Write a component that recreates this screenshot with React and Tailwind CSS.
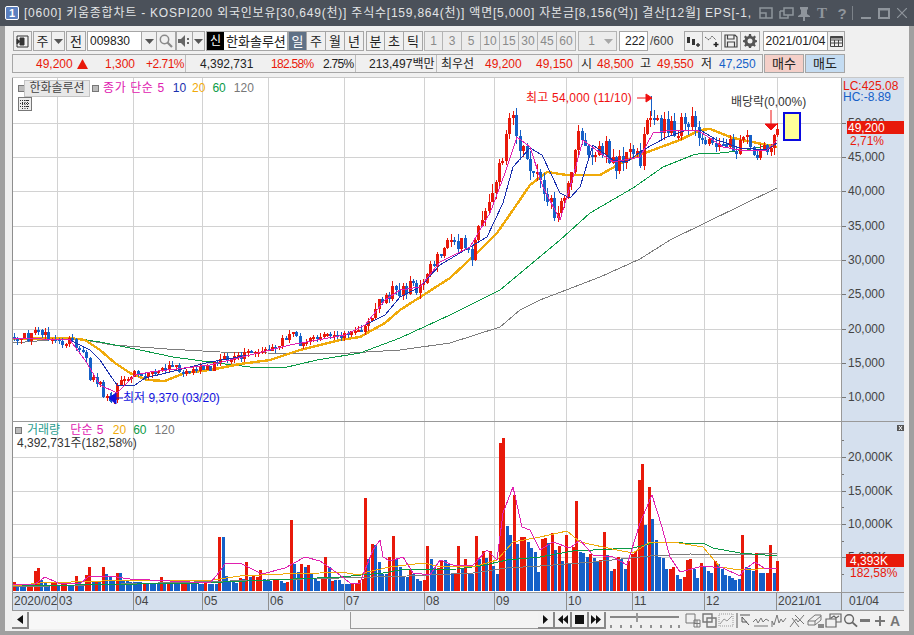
const RED = "#e8190a";
const BLUE = "#1560c8";

const pricePath = [[13,337],[20,338],[30,336],[38,327],[48,336],[58,338],[65,343],[70,339],[77,348],[87,360],[90,378],[97,380],[100,385],[103,395],[112,400],[117,388],[122,380],[128,377],[133,373],[143,377],[157,372],[173,368],[190,370],[207,369],[218,360],[233,360],[253,353],[273,349],[290,333],[300,343],[310,338],[328,332],[347,335],[363,332],[367,317],[380,305],[392,290],[405,288],[418,287],[428,270],[440,258],[448,243],[460,242],[472,255],[480,223],[487,213],[495,193],[502,157],[505,133],[512,117],[515,133],[522,147],[528,163],[535,173],[543,190],[550,203],[557,218],[562,203],[567,187],[573,167],[578,133],[583,137],[588,147],[595,160],[603,147],[608,153],[615,170],[620,153],[627,155],[635,142],[640,163],[645,133],[649,112],[655,123],[663,128],[673,127],[680,127],[690,123],[697,125],[703,138],[710,143],[717,152],[725,142],[735,148],[742,140],[747,137],[757,158],[763,150],[770,147],[773,138],[777,130]];

const ma5 = "13,338 70,340 85,360 100,385 117,393 135,375 150,372 210,365 250,355 290,345 345,335 365,325 385,300 400,290 420,287 440,262 470,247 490,213 505,173 517,137 530,147 543,187 560,220 573,177 583,140 600,153 613,162 640,157 653,133 673,130 697,130 710,138 723,147 740,150 767,150 777,140";
const ma10 = "13,338 70,340 90,350 100,360 110,375 117,385 135,385 145,378 170,372 210,362 250,355 290,345 345,335 365,325 385,315 400,297 420,287 440,265 470,247 487,237 503,203 513,167 530,148 542,155 560,193 570,198 580,187 593,145 613,160 627,162 643,150 667,137 687,130 700,130 717,140 740,148 767,150 777,143";
const ma20 = "13,339 70,338 85,340 100,350 115,363 130,373 147,380 165,381 185,373 210,370 240,364 270,360 300,350 340,340 360,337 385,323 400,310 450,278 480,250 497,233 513,210 530,185 547,172 567,175 600,175 623,162 653,150 680,140 700,130 710,129 733,138 757,143 777,147";
const ma60 = "13,338 73,338 100,342 140,350 173,357 217,363 250,367 283,368 317,360 360,353 400,338 450,315 500,290 530,265 560,240 590,213 633,188 663,167 693,155 703,153 720,153 747,150 777,143";
const ma120 = "13,343 73,338 113,345 167,349 220,352 267,353 333,354 400,350 450,343 500,327 520,310 540,300 600,277 640,259 670,240 777,188";

const vol1 = [9,-4,-4,-4,4,4,20,23,-11,-9,-6,9,9,-6,8,8,-6,-6,15,-10,-7,16,24,-10,10,-10,24,-17,-14,-10,18,-18,-10,-10,-9,-9,-9,-9,7,-7,-7,-7,-7,14,-9,9,-8,-10,-10,8,8,-8,-8,-8,-7,-7,10,-7,-7,-7,54,-54,-15,-10,-9,-8,13,-12,29,-14,15,14,21,-12,-10,-10,12,12,-10,-8,9,71,-27,-19,27,-24,26,-17,-12,-10,13,34,-24,10,-11,-11,-7,-7,-7,7,8,11,12];
const vol2 = [93,-32,47,-46,-29,-17,-17,34,55,-32,-24,-15,-14,21,-17,-12,-10,11,45,-32,-23,23,31,-31,-27,-17,17,45,-22,32,-18,-17,55,-32,40,-33,40,-25,-17,148,153,-65,-56,96,-47,54,54,-49,-43,-39,-19,52,53,-48,58,-41,45,-30,56,-28,44,90,-39,-38,-34,37,-33,-30,31,59,-36,-20,22,34,-32,-22,30,37,40,111,127,-66,104,-72,-51,-34,-33,-22,22,24,-16,-12,14,31,32,-22,-13,28,-24,-20,-18,30,-27,-22,-16,-15,-13,-11,-12,56,-24,-23,-20,38,-18,-18,18,46,-18,30];

const volMa5 = "13,585 35,584 45,577 58,583 80,584 88,577 110,576 130,579 210,583 217,575 225,564 240,563 262,574 285,568 305,557 320,561 340,575 350,583 360,583 365,570 373,550 380,540 383,557 390,561 403,557 413,573 430,575 440,560 453,565 473,565 487,550 497,560 503,513 513,487 522,527 530,530 540,550 553,542 570,548 580,540 593,555 613,557 627,565 640,523 652,495 662,527 670,557 680,572 703,566 723,568 740,576 744,570 755,562 764,568 777,568";
const volMa20 = "13,586 40,583 133,580 213,580 240,576 283,574 320,573 340,572 360,575 367,572 390,567 423,563 437,566 473,567 497,560 513,542 540,537 567,531 580,542 617,550 633,553 650,542 673,542 703,547 720,567 740,570 777,568";
const volMa60 = "13,586 200,583 340,577 383,573 400,570 457,569 480,566 507,560 540,557 573,551 633,548 657,542 683,543 703,543 713,548 740,553 777,556";
const volMa120 = "13,587 340,578 407,576 473,573 507,568 540,566 593,562 650,556 690,554 740,555 777,553";

const gridX = [57, 133, 202, 268, 344, 424, 494, 566, 632, 704, 777];
const gridY = [123, 157, 191, 226, 260, 294, 329, 363, 397];
const volGridY = [457, 491, 524, 557];

function rnd(i) {
  const s = Math.sin(i * 127.1 + 11.7) * 43758.5453;
  return s - Math.floor(s);
}

function pathAt(x) {
  for (let i = 1; i < pricePath.length; i++) {
    const [x0, y0] = pricePath[i - 1];
    const [x1, y1] = pricePath[i];
    if (x <= x1) return y0 + ((y1 - y0) * (x - x0)) / (x1 - x0);
  }
  return 130;
}

function buildCandles() {
  const out = [];
  let prev = 337;
  for (let i = 0; i < 223; i++) {
    const x = Math.min(Math.round(14 + i * 3.44), 777);
    const scale = x > 480 && x < 700 ? 13 : x > 360 ? 9 : 6;
    const close = i === 222 ? 129 : pathAt(x) + (rnd(i) - 0.5) * scale * 1.5;
    const up = close <= prev;
    const top = Math.min(close, prev);
    const bottom = Math.max(Math.max(close, prev), top + 2);
    out.push({
      x,
      top: Math.round(top),
      bottom: Math.round(bottom),
      hi: Math.round(top - rnd(i + 300) * scale * 0.7),
      lo: Math.round(bottom + rnd(i + 600) * scale * 0.7),
      up,
    });
    prev = close;
  }
  return out;
}

const candles = buildCandles();

function Line({ points, color, width = 1 }) {
  return <polyline points={points} fill="none" stroke={color} strokeWidth={width} shapeRendering="crispEdges" />;
}

function Grid({ rows, y0, y1 }) {
  return (
    <g stroke="#d2d2d2" strokeWidth="1" shapeRendering="crispEdges">
      {gridX.map((x) => (
        <line key={x} x1={x + 0.5} x2={x + 0.5} y1={y0} y2={y1} />
      ))}
      {rows.map((y) => (
        <line key={y} x1={12} x2={841} y1={y + 0.5} y2={y + 0.5} />
      ))}
    </g>
  );
}

function PriceChart() {
  return (
    <svg viewBox="13 78 828 343" className="block h-[343px] w-[828px] bg-white">
      <Grid rows={gridY} y0={78} y1={421} />
      <Line points={ma120} color="#7d7d7d" />
      <Line points={ma60} color="#0a9a46" />
      <Line points={ma20} color="#f0aa0a" width={2.4} />
      <g shapeRendering="crispEdges">
        {candles.map((c, i) => (
          <g key={i} fill={c.up ? RED : BLUE}>
            <rect x={c.x} y={c.hi} width="1" height={c.lo - c.hi} />
            <rect x={c.x - 1} y={c.top} width="3" height={c.bottom - c.top} />
          </g>
        ))}
        <rect x="651" y="96" width="1" height="20" fill={BLUE} />
        <rect x="111" y="392" width="1" height="11" fill={BLUE} />
      </g>
      <Line points={ma10} color="#1a2fae" />
      <Line points={ma5} color="#e020b0" />

      <text x="526" y="102" fontSize="12" letterSpacing="0.2" fill="#f01010">최고 54,000 (11/10)</text>
      <path d="M637 98H648M646 94L652 98L646 102Z" stroke="#f01010" fill="#f01010" />
      <text x="123" y="402" fontSize="12" fill="#1010e0">최저 9,370 (03/20)</text>
      <path d="M123 398H114M116 393L109 398L116 404Z" stroke="#1010e0" fill="#1010e0" />
      <text x="731" y="106" fontSize="12" fill="#333333">배당락(0,00%)</text>
      <path d="M771 110V124M765 124H777L771 130Z" stroke="#f01010" fill="#f01010" />
      <rect x="784" y="113" width="16" height="27" fill="#ffff99" stroke="#0a0ae0" strokeWidth="2" />
    </svg>
  );
}

function VolumeChart() {
  const n1 = vol1.length;
  const n2 = vol2.length;
  const bars = [
    ...vol1.map((v, i) => ({ v, x: Math.round(13 + (i * 348.7) / (n1 - 1)) })),
    ...vol2.map((v, i) => ({ v, x: Math.round(364 + (i * 412) / (n2 - 1)) })),
  ];
  return (
    <svg viewBox="13 422 828 170" className="block h-[170px] w-[828px] bg-white">
      <Grid rows={volGridY} y0={422} y1={592} />
      <g shapeRendering="crispEdges">
        {bars.map((b, i) => (
          <rect key={i} x={b.x} y={591 - Math.abs(b.v)} width="3" height={Math.abs(b.v)} fill={b.v > 0 ? RED : BLUE} />
        ))}
      </g>
      <Line points={volMa120} color="#7d7d7d" />
      <Line points={volMa60} color="#0a9a46" />
      <Line points={volMa20} color="#f0aa0a" />
      <Line points={volMa5} color="#e020b0" />
    </svg>
  );
}

const priceTicks = [
  ["50,000", 123], ["45,000", 157], ["40,000", 191], ["35,000", 226], ["30,000", 260],
  ["25,000", 294], ["20,000", 329], ["15,000", 363], ["10,000", 397],
];
const volTicks = [["20,000K", 457], ["15,000K", 491], ["10,000K", 524], ["5,000K", 557]];

function PriceAxis() {
  return (
    <svg viewBox="842 78 62 343" className="block h-[343px] w-[62px]">
      <g stroke="#777777" shapeRendering="crispEdges">
        {priceTicks.map(([, y]) => (
          <line key={y} x1="841" x2="846" y1={y + 0.5} y2={y + 0.5} />
        ))}
      </g>
      <g fontSize="12" fill="#444444">
        {priceTicks.map(([t, y]) => (
          <text key={t} x="848" y={y + 4}>{t}</text>
        ))}
      </g>
      <text x="843" y="90" fontSize="12" fill="#e8190a">LC:425.08</text>
      <text x="843" y="101" fontSize="12" fill="#1560c8">HC:-8.89</text>
      <rect x="847" y="121" width="57" height="13" fill={RED} />
      <text x="848" y="132" fontSize="12" fill="#ffffff">49,200</text>
      <text x="850" y="145" fontSize="12" fill="#e8190a">2,71%</text>
    </svg>
  );
}

function VolumeAxis() {
  const minor = [440, 474, 507, 541, 574];
  return (
    <svg viewBox="842 422 62 170" className="block h-[170px] w-[62px]">
      <g stroke="#777777" shapeRendering="crispEdges">
        {volTicks.map(([, y]) => (
          <line key={y} x1="841" x2="846" y1={y + 0.5} y2={y + 0.5} />
        ))}
        {minor.map((y) => (
          <line key={y} x1="841" x2="844" y1={y + 0.5} y2={y + 0.5} />
        ))}
      </g>
      <g fontSize="12" fill="#444444">
        {volTicks.map(([t, y]) => (
          <text key={t} x="848" y={y + 4}>{t}</text>
        ))}
      </g>
      <rect x="846" y="554" width="58" height="13" fill={RED} />
      <text x="850" y="565" fontSize="12" fill="#ffffff">4,393K</text>
      <text x="850" y="577" fontSize="12" fill="#e8190a">182,58%</text>
      <rect x="897" y="425" width="7" height="6" fill="#555555" />
      <path d="M899 426L902 430M902 426L899 430" stroke="#ffffff" />
    </svg>
  );
}

const months = [
  ["2020/02", 45], ["03", 76], ["04", 69], ["05", 66], ["06", 76], ["07", 80], ["08", 70],
  ["09", 72], ["10", 66], ["11", 72], ["12", 72], ["2021/01", 65],
];

function Btn({ className = "", children, active }) {
  return (
    <div
      className={`flex h-full shrink-0 items-center justify-center border border-[#a6a6a6] text-[13px] ${
        active ? "bg-[#5f7186] text-white" : "bg-[#f0f0f0] text-[#222]"
      } ${className}`}
    >
      {children}
    </div>
  );
}

function Arrow({ color = "#555" }) {
  return (
    <svg width="9" height="5" viewBox="0 0 9 5">
      <path d="M0 0H9L4.5 5Z" fill={color} />
    </svg>
  );
}

function Num({ className = "", children }) {
  return <span className={`absolute top-[2px] whitespace-nowrap ${className}`}>{children}</span>;
}

function TitleIcons() {
  return (
    <div className="flex shrink-0 items-center pr-[7px]">
      <div className="flex w-[20px] justify-center">
        <svg width="16" height="14" viewBox="0 0 16 14" fill="none" stroke="#8f959c" strokeWidth="1.5">
          <path d="M2 2H14V12H2ZM2 7H8V12" />
        </svg>
      </div>
      <div className="flex w-[20px] justify-center">
        <svg width="17" height="14" viewBox="0 0 17 14" fill="none" stroke="#8f959c" strokeWidth="1.5">
          <path d="M6 2H15V9H6ZM2 5H6M2 5V12H10V9" />
        </svg>
      </div>
      <div className="flex w-[16px] justify-center">
        <svg width="14" height="15" viewBox="0 0 14 15" fill="#8f959c">
          <path d="M3 1H11V3L10 4V8L13 10V11H8V15H6V11H1V10L4 8V4L3 3Z" />
        </svg>
      </div>
      <span className="w-[20px] text-center text-[15px] leading-none font-bold text-[#8f959c] [font-family:'Liberation_Serif',serif]">T</span>
      <span className="w-[20px] text-center text-[15px] leading-none font-bold text-[#8f959c]">?</span>
      <div className="h-[14px] w-px bg-[#7c8289]" />
      <div className="flex w-[25px] justify-center">
        <div className="mt-[9px] h-[2px] w-[10px] bg-[#8f959c]" />
      </div>
      <svg width="12" height="12" viewBox="0 0 12 12" fill="none" stroke="#8f959c" strokeWidth="1.5">
        <path d="M1 2H11V11H1ZM1 2.5H11" strokeWidth="2" />
      </svg>
      <svg width="10" height="10" viewBox="0 0 10 10" stroke="#8f959c" strokeWidth="1.2" className="ml-[7px]">
        <path d="M0 0L10 10M10 0L0 10" />
      </svg>
    </div>
  );
}

function Toolbar() {
  return (
    <div className="mt-[5px] flex h-[20px] items-center pl-[8px] leading-none">
      <Btn className="w-[19px]">
        <svg width="13" height="13" viewBox="0 0 13 13" fill="none" stroke="#333">
          <path d="M1 1H12V12H1Z" />
          <path d="M4 3H8V10H4Z" fill="#333" />
          <path d="M4 6.5L1 4V9Z" fill="#333" />
        </svg>
      </Btn>
      <Btn className="ml-px w-[19px]">주</Btn>
      <Btn className="w-[13px] border-l-0"><Arrow /></Btn>
      <Btn className="ml-px w-[20px]">전</Btn>
      <div className="ml-px flex h-full w-[55px] shrink-0 items-center border border-[#a6a6a6] bg-white pl-[2px] text-[12px] text-[#222]">009830</div>
      <Btn className="w-[14px] border-x-0"><Arrow /></Btn>
      <Btn className="w-[20px]">
        <svg width="14" height="14" viewBox="0 0 14 14" fill="none" stroke="#8a8a8a" strokeWidth="1.5">
          <circle cx="5.5" cy="5.5" r="4.2" />
          <path d="M8.5 8.5L13 13" strokeWidth="2.2" />
        </svg>
      </Btn>
      <Btn className="w-[17px]">
        <svg width="13" height="12" viewBox="0 0 13 12" fill="#666">
          <path d="M0 4H3L7 0V12L3 8H0Z" />
          <path d="M9 3H11V5H9ZM9 7H11V9H9Z" />
        </svg>
      </Btn>
      <Btn className="w-[12px] border-l-0"><Arrow /></Btn>
      <div className="ml-px flex h-full w-[82px] shrink-0 items-center border border-[#a6a6a6] bg-white text-[13px] text-[#222]">
        <span className="mr-[2px] flex h-full w-[17px] items-center justify-center bg-black text-[12px] text-white">신</span>
        <span className="whitespace-nowrap">한화솔루션</span>
      </div>
      <Btn className="w-[19px]" active>일</Btn>
      <Btn className="w-[19px] border-l-0">주</Btn>
      <Btn className="w-[19px] border-l-0">월</Btn>
      <Btn className="w-[19px] border-l-0">년</Btn>
      <Btn className="ml-[2px] w-[19px]">분</Btn>
      <Btn className="w-[19px] border-l-0">초</Btn>
      <Btn className="w-[19px] border-l-0">틱</Btn>
      <div className="ml-px flex h-full shrink-0 text-[12px]">
        {["1", "3", "5", "10", "15", "30", "45", "60"].map((t, i) => (
          <div
            key={t}
            className={`flex h-full w-[19px] items-center justify-center border border-[#b4b4b4] bg-[#ececec] text-[#8a8a8a] ${i ? "border-l-0" : ""}`}
          >
            {t}
          </div>
        ))}
      </div>
      <div className="ml-[2px] flex h-full w-[39px] shrink-0 items-center border border-[#b4b4b4] bg-[#ececec] text-[12px] text-[#8a8a8a]">
        <span className="w-[25px] text-center">1</span>
        <Arrow color="#a8a8a8" />
      </div>
      <div className="ml-[2px] flex h-full w-[29px] shrink-0 items-center justify-end border border-[#a6a6a6] bg-white pr-[2px] text-[12px] text-[#222]">222</div>
      <span className="ml-[2px] w-[32px] shrink-0 text-[12px] text-[#444]">/600</span>
      <Btn className="ml-[2px] w-[19px]">
        <svg width="15" height="13" viewBox="0 0 15 13" fill="#333">
          <path d="M1 2H4V8H1ZM6 4H9V10H6Z" />
          <path d="M12 8V12M10 10H14" stroke="#333" strokeWidth="1.4" />
        </svg>
      </Btn>
      <Btn className="w-[19px] border-l-0">
        <svg width="16" height="14" viewBox="0 0 16 14" fill="none" stroke="#555">
          <path d="M1 3L5 6L8 2L12 6" strokeDasharray="2 1" />
          <path d="M12 8V13M9.5 10.5H14.5" stroke="#222" strokeWidth="1.6" />
        </svg>
      </Btn>
      <Btn className="w-[19px] border-l-0">
        <svg width="14" height="14" viewBox="0 0 14 14" fill="none" stroke="#444" strokeWidth="1.2">
          <path d="M1 1H11L13 3V13H1ZM3.5 1V5H10V1M3.5 13V8H10.5V13" />
        </svg>
      </Btn>
      <Btn className="w-[19px] border-l-0">
        <svg width="14" height="14" viewBox="0 0 14 14" fill="#555">
          <path fillRule="evenodd" d="M6 0H8L8.4 2L10 2.7L11.7 1.6L12.9 2.9L11.9 4.5L12.4 6L14 6.3V8L12.4 8.4L11.8 10L12.8 11.6L11.6 12.8L10 11.8L8.4 12.4L8 14H6L5.6 12.4L4 11.8L2.4 12.8L1.2 11.6L2.2 10L1.6 8.4L0 8V6.3L1.6 6L2.1 4.5L1.1 2.9L2.3 1.6L4 2.7L5.6 2ZM7 4.5A2.5 2.5 0 1 0 7 9.5A2.5 2.5 0 1 0 7 4.5Z" />
        </svg>
      </Btn>
      <div className="ml-[3px] flex h-full w-[65px] shrink-0 items-center justify-center border border-[#a6a6a6] bg-white text-[12px] text-[#222]">2021/01/04</div>
      <Btn className="w-[17px] border-l-0">
        <svg width="13" height="11" viewBox="0 0 13 11" fill="none" stroke="#444">
          <path d="M.5.5H12.5V10.5H.5ZM.5 4H12.5M.5 7H12.5M4.5 4V10.5M8.5 4V10.5" />
          <path d="M.5 1.5H12.5" strokeWidth="2" />
        </svg>
      </Btn>
    </div>
  );
}

function QuoteRow() {
  return (
    <div className="mt-[3px] flex h-[19px] items-stretch pl-[7px] text-[12px] leading-[15px]">
      <div className="relative h-full w-[751px] shrink-0 border border-[#a6a6a6] bg-[#f0f0f0] text-[#222]">
        <Num className="left-[23px] text-[#e8190a]">49,200</Num>
        <svg width="11" height="10" viewBox="0 0 11 10" className="absolute left-[64px] top-[4px]">
          <path d="M5.5 0L11 10H0Z" fill={RED} />
        </svg>
        <Num className="left-[92px] text-[#e8190a]">1,300</Num>
        <Num className="left-[133px] tracking-[-0.5px] text-[#e8190a]">+2.71%</Num>
        <div className="absolute left-[172px] top-0 h-full w-px bg-[#bdbdbd]" />
        <Num className="left-[187px]">4,392,731</Num>
        <Num className="left-[258px] tracking-[-0.7px] text-[#e8190a]">182.58%</Num>
        <Num className="left-[310px] tracking-[-0.7px]">2.75%</Num>
        <div className="absolute left-[342px] top-0 h-full w-px bg-[#bdbdbd]" />
        <Num className="left-[356px]">213,497백만</Num>
        <div className="absolute left-[423px] top-0 h-full w-px bg-[#bdbdbd]" />
        <Num className="left-[428px]">최우선</Num>
        <Num className="left-[472px] text-[#e8190a]">49,200</Num>
        <Num className="left-[523px] text-[#e8190a]">49,150</Num>
        <div className="absolute left-[565px] top-0 h-full w-px bg-[#bdbdbd]" />
        <Num className="left-[568px]">시</Num>
        <Num className="left-[584px] text-[#e8190a]">48,500</Num>
        <Num className="left-[627px]">고</Num>
        <Num className="left-[644px] text-[#e8190a]">49,550</Num>
        <Num className="left-[688px]">저</Num>
        <Num className="left-[706px] text-[#1560c8]">47,250</Num>
      </div>
      <div className="ml-px flex w-[40px] shrink-0 items-center justify-center border border-[#a6a6a6] bg-[#f4cfc8] text-[13px] text-[#222]">매수</div>
      <div className="ml-px flex w-[40px] shrink-0 items-center justify-center border border-[#a6a6a6] bg-[#c4dcf2] text-[13px] text-[#222]">매도</div>
    </div>
  );
}

function ChartPanel() {
  return (
    <div className="ml-[7px] mt-[4px] w-[892px] border-t border-[#c8c8c8] text-[12px]">
      <div className="relative flex">
        <div className="border-l border-[#8e8e8e]">
          <PriceChart />
        </div>
        <div className="border-l border-[#999] bg-[#d5e0ee]">
          <PriceAxis />
        </div>
        <div className="absolute left-[6px] top-[2px] flex items-center text-[12px] leading-[15px]">
          <div className="size-[7px] border border-[#777] bg-[#bbb]" />
          <div className="ml-[-1px] w-[66px] border border-[#c4c4c4] bg-[#e8e8e8] text-center text-[#444]">한화솔루션</div>
          <div className="ml-[2px] size-[7px] border border-[#777] bg-[#bbb]" />
          <span className="ml-[4px] tracking-[0.6px] text-[#e020b0]">종가 단순 5</span>
          <span className="ml-[8px] text-[#1a2fae]">10</span>
          <span className="ml-[6px] text-[#f0aa0a]">20</span>
          <span className="ml-[7px] text-[#0a9a46]">60</span>
          <span className="ml-[8px] text-[#777]">120</span>
        </div>
        <div className="absolute left-[6px] top-[19px] flex size-[14px] items-center justify-center border border-[#777] bg-[#eee]">
          <svg width="10" height="9" viewBox="0 0 10 9" fill="none" stroke="#333">
            <path d="M0 .5H10M0 3.5H10M0 6.5H10M2.5 0V9M5 0V9M7.5 0V9" strokeDasharray="1 1" />
          </svg>
        </div>
      </div>
      <div className="h-px bg-[#999]" />
      <div className="relative flex">
        <div className="border-l border-[#8e8e8e]">
          <VolumeChart />
        </div>
        <div className="border-l border-[#999] bg-[#d5e0ee]">
          <VolumeAxis />
        </div>
        <div className="absolute left-[3px] top-[2px] text-[12px] leading-[13px]">
          <div className="flex items-center">
            <div className="size-[7px] border border-[#777] bg-[#bbb]" />
            <span className="ml-[5px] text-[#2a9d8f]">거래량</span>
            <span className="ml-[10px] tracking-[0.4px] text-[#e020b0]">단순 5</span>
            <span className="ml-[9px] text-[#f0aa0a]">20</span>
            <span className="ml-[7px] text-[#0a9a46]">60</span>
            <span className="ml-[8px] text-[#777]">120</span>
          </div>
          <div className="ml-[2px] text-[#333]">4,392,731주(182,58%)</div>
        </div>
      </div>
      <div className="flex h-[19px] border-y border-[#999] bg-[#d5e0ee] text-[12px] leading-[17px] text-[#444]">
        {months.map(([t, w]) => (
          <div key={t} className="shrink-0 border-l border-[#8e8e8e] pl-px" style={{ width: w }}>
            {t}
          </div>
        ))}
        <div className="w-[63px] shrink-0 border-l border-[#8e8e8e] pl-[7px]">01/04</div>
      </div>
    </div>
  );
}

function ScrollRow() {
  const player = [
    <path key="a" d="M5 3L10 7.5L5 12Z" />,
    <path key="b" d="M8 3L3 7.5L8 12ZM13 3L8 7.5L13 12Z" />,
    <path key="c" d="M3 3H12V12H3Z" />,
    <path key="d" d="M2 3L7 7.5L2 12ZM7 3L12 7.5L7 12Z" />,
  ];
  return (
    <div className="mt-px flex h-[17px] items-stretch pl-[7px]">
      <div className="flex w-[17px] shrink-0 items-center justify-center border-r-2 border-b-2 border-[#888] bg-[#f2f2f2]">
        <svg width="6" height="9" viewBox="0 0 6 9"><path d="M6 0L0 4.5L6 9Z" fill="#111" /></svg>
      </div>
      <div className="w-[321px] shrink-0 bg-[#f7f7f7]" />
      <div className="w-[188px] shrink-0 border-l border-b border-[#999] bg-[#f3f3f3]" />
      {player.map((p, i) => (
        <div key={i} className="flex w-[17px] shrink-0 items-center justify-center border-r-2 border-b-2 border-[#888] bg-[#f2f2f2]">
          <svg width="15" height="15" viewBox="0 0 15 15" fill="#111">{p}</svg>
        </div>
      ))}
      <svg width="72" height="17" viewBox="0 0 72 17" className="ml-[3px] shrink-0">
        <path d="M1 5H70" stroke="#888" strokeWidth="2" />
        <rect x="27" y="1" width="2" height="9" fill="#999" />
        <path d="M2 13V16M12 13V16M22 13V16M32 13V16M42 13V16M52 13V16M62 13V16M70 13V16" stroke="#333" />
      </svg>
      <div className="ml-[4px] flex shrink-0 items-center gap-px text-[#777]">
        <svg width="16" height="15" viewBox="0 0 16 15" fill="none" stroke="#777"><path d="M1 1H10V10H1ZM9 7H15V14H9ZM12 7V14M9 10.5H15" /></svg>
        <svg width="15" height="15" viewBox="0 0 15 15" fill="none" stroke="#777" strokeWidth="1.4"><path d="M1 1H10V9H1ZM5 5H14V14H5Z" /></svg>
        <svg width="16" height="15" viewBox="0 0 16 15" fill="none" stroke="#999"><path d="M1 1H15V13H1Z" strokeDasharray="1 1" /><path d="M2 11L6 6L9 8L14 3" /></svg>
        <svg width="16" height="15" viewBox="0 0 16 15" fill="none" stroke="#555" className="ml-px"><path d="M1 0V15M4 2H14M6 4V9H11M6 4L13 12" /></svg>
        <svg width="17" height="15" viewBox="0 0 17 15" fill="none" stroke="#777"><path d="M0 9L3 6L5 10L8 5L10 9L13 6L16 8M1 13H15" /></svg>
        <svg width="17" height="15" viewBox="0 0 17 15" fill="none" stroke="#777"><path d="M1 14V8L3 12L6 2L8 10L10 6L12 9L15 5" /></svg>
        <svg width="17" height="15" viewBox="0 0 17 15" fill="none" stroke="#777"><path d="M1 14L7 6L9 9L15 2M3 5L10 14M6 2L15 11" /></svg>
        <svg width="17" height="15" viewBox="0 0 17 15" fill="none" stroke="#777"><path d="M1 8L8 2H14V7L8 12H1ZM1 8H8V12M8 8L14 3" /><path d="M12 11V15M14 11V15M16 11V15" stroke="#222" /></svg>
        <svg width="17" height="15" viewBox="0 0 17 15" fill="none" stroke="#666" strokeWidth="1.2"><path d="M5 1H16V9H11V14H1V6H5ZM5 6H11V9M6 5L9 3L11 5L14 3" /></svg>
        <svg width="15" height="15" viewBox="0 0 16 15" fill="none" stroke="#666" strokeWidth="1.5"><circle cx="6.5" cy="6" r="4.7" /><path d="M10 9.5L15 14" strokeWidth="2" /></svg>
        <div className="ml-px h-[3px] w-[10px] bg-[#777]" />
        <svg width="12" height="12" viewBox="0 0 12 12" className="ml-[3px]" fill="#777"><path d="M5 1H7V5H11V7H7V11H5V7H1V5H5Z" /></svg>
        <span className="ml-[3px] text-[14px] leading-none font-bold text-[#777]">A</span>
      </div>
    </div>
  );
}

export default function App() {
  return (
    <div className="flex h-[635px] w-[914px] flex-col overflow-hidden bg-[#f0f0f0] [font-family:'Liberation_Sans','Noto_Sans_CJK_KR',sans-serif]">
      <div className="flex h-[26px] shrink-0 items-center justify-between bg-[#4b515a] pl-[5px]">
        <div className="flex min-w-0 flex-1 items-center overflow-hidden">
          <div className="flex size-[14px] shrink-0 items-center justify-center rounded-[2px] border border-white bg-[#5b80c0] text-[11px] leading-none font-bold text-white">1</div>
          <span className="ml-[5px] whitespace-nowrap text-[12px] tracking-[0.78px] text-[#e2e4e6]">
            [0600] 키움종합차트 - KOSPI200 외국인보유[30,649(천)] 주식수[159,864(천)] 액면[5,000] 자본금[8,156(억)] 결산[12월] EPS[-1,
          </span>
        </div>
        <TitleIcons />
      </div>
      <div className="flex min-h-0 flex-1 flex-col border-x-[5px] border-b-[4px] border-[#a0a0a0]">
        <Toolbar />
        <QuoteRow />
        <ChartPanel />
        <ScrollRow />
      </div>
    </div>
  );
}
